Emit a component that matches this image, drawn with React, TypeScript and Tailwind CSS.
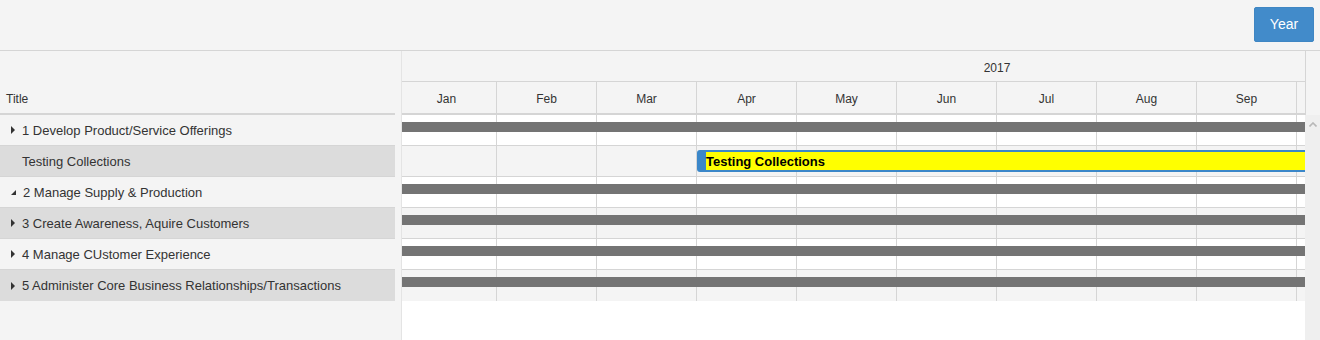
const months = ["Jan", "Feb", "Mar", "Apr", "May", "Jun", "Jul", "Aug", "Sep", "Oct", "Nov", "Dec"];

type Row = { title: string; kind: "collapsed" | "expanded" | "child"; bar: "summary" | "task" };

const rows: Row[] = [
  { title: "1 Develop Product/Service Offerings", kind: "collapsed", bar: "summary" },
  { title: "Testing Collections", kind: "child", bar: "task" },
  { title: "2 Manage Supply & Production", kind: "expanded", bar: "summary" },
  { title: "3 Create Awareness, Aquire Customers", kind: "collapsed", bar: "summary" },
  { title: "4 Manage CUstomer Experience", kind: "collapsed", bar: "summary" },
  { title: "5 Administer Core Business Relationships/Transactions", kind: "collapsed", bar: "summary" },
];

function Arrow({ kind }: { kind: Row["kind"] }) {
  if (kind === "child") return <span className="w-[5px]" />;
  if (kind === "expanded")
    return (
      <svg width="6" height="6" viewBox="0 0 6 6" className="mt-[2px]">
        <polygon points="5,0 5,5 0,5" fill="#333" />
      </svg>
    );
  return (
    <svg width="5" height="8" viewBox="0 0 5 8">
      <polygon points="0,0 4,4 0,8" fill="#333" />
    </svg>
  );
}

export default function App() {
  return (
    <div
      className="w-[1320px] h-[340px] overflow-hidden bg-[#f4f4f4] text-[12px] text-[#333]"
      style={{ fontFamily: '"Liberation Sans", Arial, sans-serif' }}
    >
      {/* toolbar */}
      <div className="h-[51px] border-b border-[#d5d5d5] flex justify-end pt-[7px] pr-[6px]">
        <button className="w-[60px] h-[35px] bg-[#428bca] text-white text-[14px] rounded-[2px] border border-[#3f86c3]">
          Year
        </button>
      </div>

      <div className="flex h-[289px]">
        {/* tree list */}
        <div className="w-[395px] flex flex-col">
          <div className="h-[64px] border-b-2 border-[#d5d5d5] flex items-end">
            <div className="h-[31px] flex items-center pl-[6px] pt-[3px]">Title</div>
          </div>
          {rows.map((r, i) => (
            <div
              key={r.title}
              className={`h-[31px] flex items-center pl-[11px] gap-[6px] text-[13px] ${i < rows.length - 1 ? "border-b border-[#d5d5d5]" : ""} ${i % 2 === 1 ? "bg-[#dcdcdc]" : "bg-[#f4f4f4]"}`}
            >
              <Arrow kind={r.kind} />
              <span className="pt-[1px]">{r.title}</span>
            </div>
          ))}
        </div>

        {/* splitter */}
        <div className="w-[7px] border-r border-[#e4e4e4]" />

        {/* timeline */}
        <div className="w-[903px] overflow-hidden flex flex-col">
          <div className="w-[1200px] -ml-[5px]">
            <div className="h-[31px] border-b border-[#d5d5d5] flex items-center justify-center pt-[4px]">2017</div>
            <div className="h-[33px] border-b-2 border-[#d5d5d5] flex">
              {months.map((m) => (
                <div key={m} className="w-[100px] border-r border-[#d5d5d5] flex items-center justify-center pt-[3px]">
                  {m}
                </div>
              ))}
            </div>
            {rows.map((r, i) => (
              <div
                key={r.title}
                className={`relative h-[31px] flex ${i < rows.length - 1 ? "border-b border-[#d5d5d5]" : ""} ${i % 2 === 1 ? "bg-[#f4f4f4]" : "bg-white"}`}
              >
                {months.map((m) => (
                  <div key={m} className="w-[100px] border-r border-[#d5d5d5]" />
                ))}
                {r.bar === "summary" ? (
                  <div className="absolute left-0 right-0 top-[7px] h-[10px] bg-[#747474]" />
                ) : (
                  <div className="absolute left-[300px] right-0 top-[4px] h-[22px] bg-[#3b87c9] rounded-[3px] pl-[9px] py-[2px]">
                    <div className="h-[18px] bg-[#ffff00] text-black text-[13px] font-bold flex items-center pt-[1px]">
                      Testing Collections
                    </div>
                  </div>
                )}
              </div>
            ))}
          </div>
          <div className="flex-1 bg-white" />
        </div>

        {/* scrollbar column */}
        <div className="w-[15px] flex flex-col">
          <div className="h-[64px] border-l border-[#d5d5d5]" />
          <div className="flex-1 bg-[#efefef] flex justify-center pt-[7px]">
            <svg width="8" height="5" viewBox="0 0 8 5">
              <polyline points="0.5,4.5 4,1 7.5,4.5" fill="none" stroke="#b8b8b8" strokeWidth="1.6" />
            </svg>
          </div>
        </div>
      </div>
    </div>
  );
}
